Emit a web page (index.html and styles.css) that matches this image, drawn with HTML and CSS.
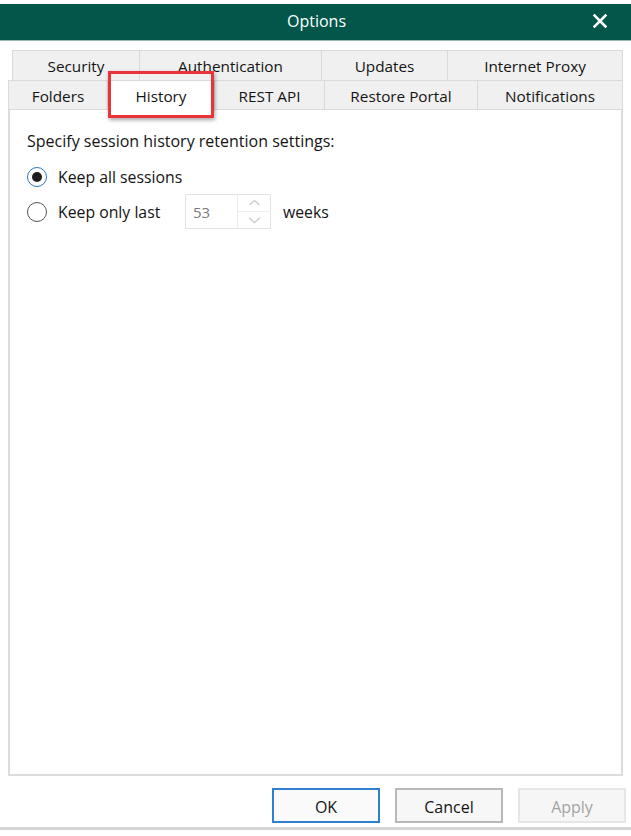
FILE: index.html
```html
<!DOCTYPE html>
<html>
<head>
<meta charset="utf-8">
<link rel="stylesheet" href="styles.css">
</head>
<body>
<div class="titlebar">
  <span class="title">Options</span>
  <svg class="close" width="14" height="14" viewBox="0 0 14 14"><path d="M1.5 1.5 L12.5 12.5 M12.5 1.5 L1.5 12.5" stroke="#fff" stroke-width="2.6" stroke-linecap="square" fill="none"/></svg>
</div>
<div class="tabs">
  <div class="row row1">
    <div class="tab w-security">Security</div>
    <div class="tab w-auth">Authentication</div>
    <div class="tab w-updates">Updates</div>
    <div class="tab w-proxy">Internet Proxy</div>
  </div>
  <div class="row row2">
    <div class="tab w-folders">Folders</div>
    <div class="tab w-history selected">History<span class="highlight"></span></div>
    <div class="tab w-rest">REST API</div>
    <div class="tab w-portal">Restore Portal</div>
    <div class="tab w-notif">Notifications</div>
  </div>
</div>
<div class="panel">
  <div class="caption">Specify session history retention settings:</div>
  <div class="option">
    <span class="radio checked"></span>
    <span class="label">Keep all sessions</span>
  </div>
  <div class="option">
    <span class="radio"></span>
    <span class="label label-last">Keep only last</span>
    <div class="spin">
      <span class="spin-value">53</span>
      <div class="spin-arrows">
        <svg width="33" height="17" viewBox="0 0 33 17"><path d="M11 11 L16.5 6 L22 11" stroke="#c8c8c8" stroke-width="1.3" fill="none"/></svg>
        <svg width="33" height="17" viewBox="0 0 33 17"><path d="M11 6 L16.5 11 L22 6" stroke="#c8c8c8" stroke-width="1.3" fill="none"/></svg>
      </div>
    </div>
    <span class="label weeks">weeks</span>
  </div>
</div>
<div class="buttons">
  <button class="btn btn-ok">OK</button>
  <button class="btn btn-cancel">Cancel</button>
  <button class="btn btn-apply">Apply</button>
</div>
<div class="bottomline"></div>
</body>
</html>
```
FILE: styles.css
```css
* { box-sizing: border-box; }
html, body { margin: 0; padding: 0; background: #ffffff; }
body {
  font-family: "Open Sans", "Noto Sans", sans-serif;
  font-size: 15px;
  font-weight: 500;
  color: #141414;
  width: 631px;
  height: 836px;
  overflow: hidden;
}
.titlebar {
  margin-top: 4px;
  height: 37px;
  background: #02574a;
  border-bottom: 1px solid #9cbcb2;
  display: flex;
  align-items: center;
  justify-content: center;
  position: relative;
}
.title {
  color: #ffffff;
  font-size: 16px;
  margin-left: 2px;
  margin-top: -3px;
}
.close {
  position: absolute;
  right: 24px;
  top: 10px;
}
.tabs {
  margin-top: 9px;
}
.row { display: flex; height: 30px; }
.row1 { margin-left: 12px; }
.row2 { margin-left: 8px; }
.tab {
  background: #f0f0f0;
  border: 1px solid #dadada;
  border-left: none;
  display: flex;
  align-items: center;
  justify-content: center;
  font-size: 15.3px;
  padding-top: 1px;
}
.row1 .tab { border-bottom: none; padding-top: 0; }
.row .tab:first-child { border-left: 1px solid #dadada; }
.w-security { width: 128px; }
.w-auth { width: 182px; }
.w-updates { width: 126px; }
.w-proxy { width: 175px; }
.w-folders { width: 100px; }
.w-history { width: 107px; }
.w-rest { width: 110px; }
.w-portal { width: 153px; }
.w-notif { width: 145px; }
.tab.selected {
  background: #ffffff;
  border-bottom-color: #ffffff;
  position: relative;
  z-index: 2;
  height: 31px;
}
.highlight {
  position: absolute;
  left: 0;
  right: 0;
  top: -10px;
  bottom: -8px;
  border: 3px solid #e9353a;
  box-shadow: 1px 2px 4px rgba(0,0,0,0.35);
}
.panel {
  margin-left: 8px;
  width: 615px;
  height: 667px;
  margin-top: -1px;
  border: 2px solid #dcdcdc;
  border-top-width: 1px;
  padding: 20px 0 0 17px;
}
.caption {
  font-size: 16px;
  line-height: 22px;
  margin-bottom: 7px;
}
.option {
  display: flex;
  align-items: center;
  height: 35px;
}
.radio {
  width: 20px;
  height: 20px;
  border-radius: 50%;
  border: 1.5px solid #555;
  background: #fff;
  display: flex;
  align-items: center;
  justify-content: center;
  margin-right: 11px;
}
.radio.checked { border-color: #2a78c2; }
.radio.checked::after {
  content: "";
  width: 10px;
  height: 10px;
  border-radius: 50%;
  background: #1e1e1e;
}
.label { font-size: 15.8px; }
.label-last { width: 127px; }
.spin {
  width: 86px;
  height: 35px;
  border: 1px solid #e2e2e2;
  display: flex;
}
.spin-value {
  flex: 1;
  display: flex;
  align-items: center;
  padding-left: 7px;
  color: #7a7a7a;
  font-size: 15px;
  font-weight: 400;
}
.spin-arrows {
  width: 33px;
  display: flex;
  flex-direction: column;
  border-left: 1px solid #ededed;
}
.spin-arrows svg { display: block; }
.spin-arrows svg:first-child { border-bottom: 1px solid #ededed; }
.weeks { margin-left: 12px; }
.buttons {
  display: flex;
  justify-content: flex-end;
  gap: 15px;
  padding-right: 5px;
  margin-top: 12px;
}
.btn {
  width: 108px;
  height: 35px;
  font-family: "Open Sans", "Noto Sans", sans-serif;
  font-size: 16px;
  font-weight: 500;
  background: #f7f7f7;
  border: 2px solid #cfcfcf;
  color: #141414;
  padding: 2px 0 0 0;
}
.btn-ok { border: 2px solid #2d7fcf; background: #fafafa; }
.btn-cancel { border-color: #b8b8b8; }
.btn-apply { border-color: #e6e6e6; color: #a3a3a3; background: #f6f6f6; }
.bottomline {
  margin-top: 4px;
  height: 3px;
  background: #d4d4d4;
}
```
